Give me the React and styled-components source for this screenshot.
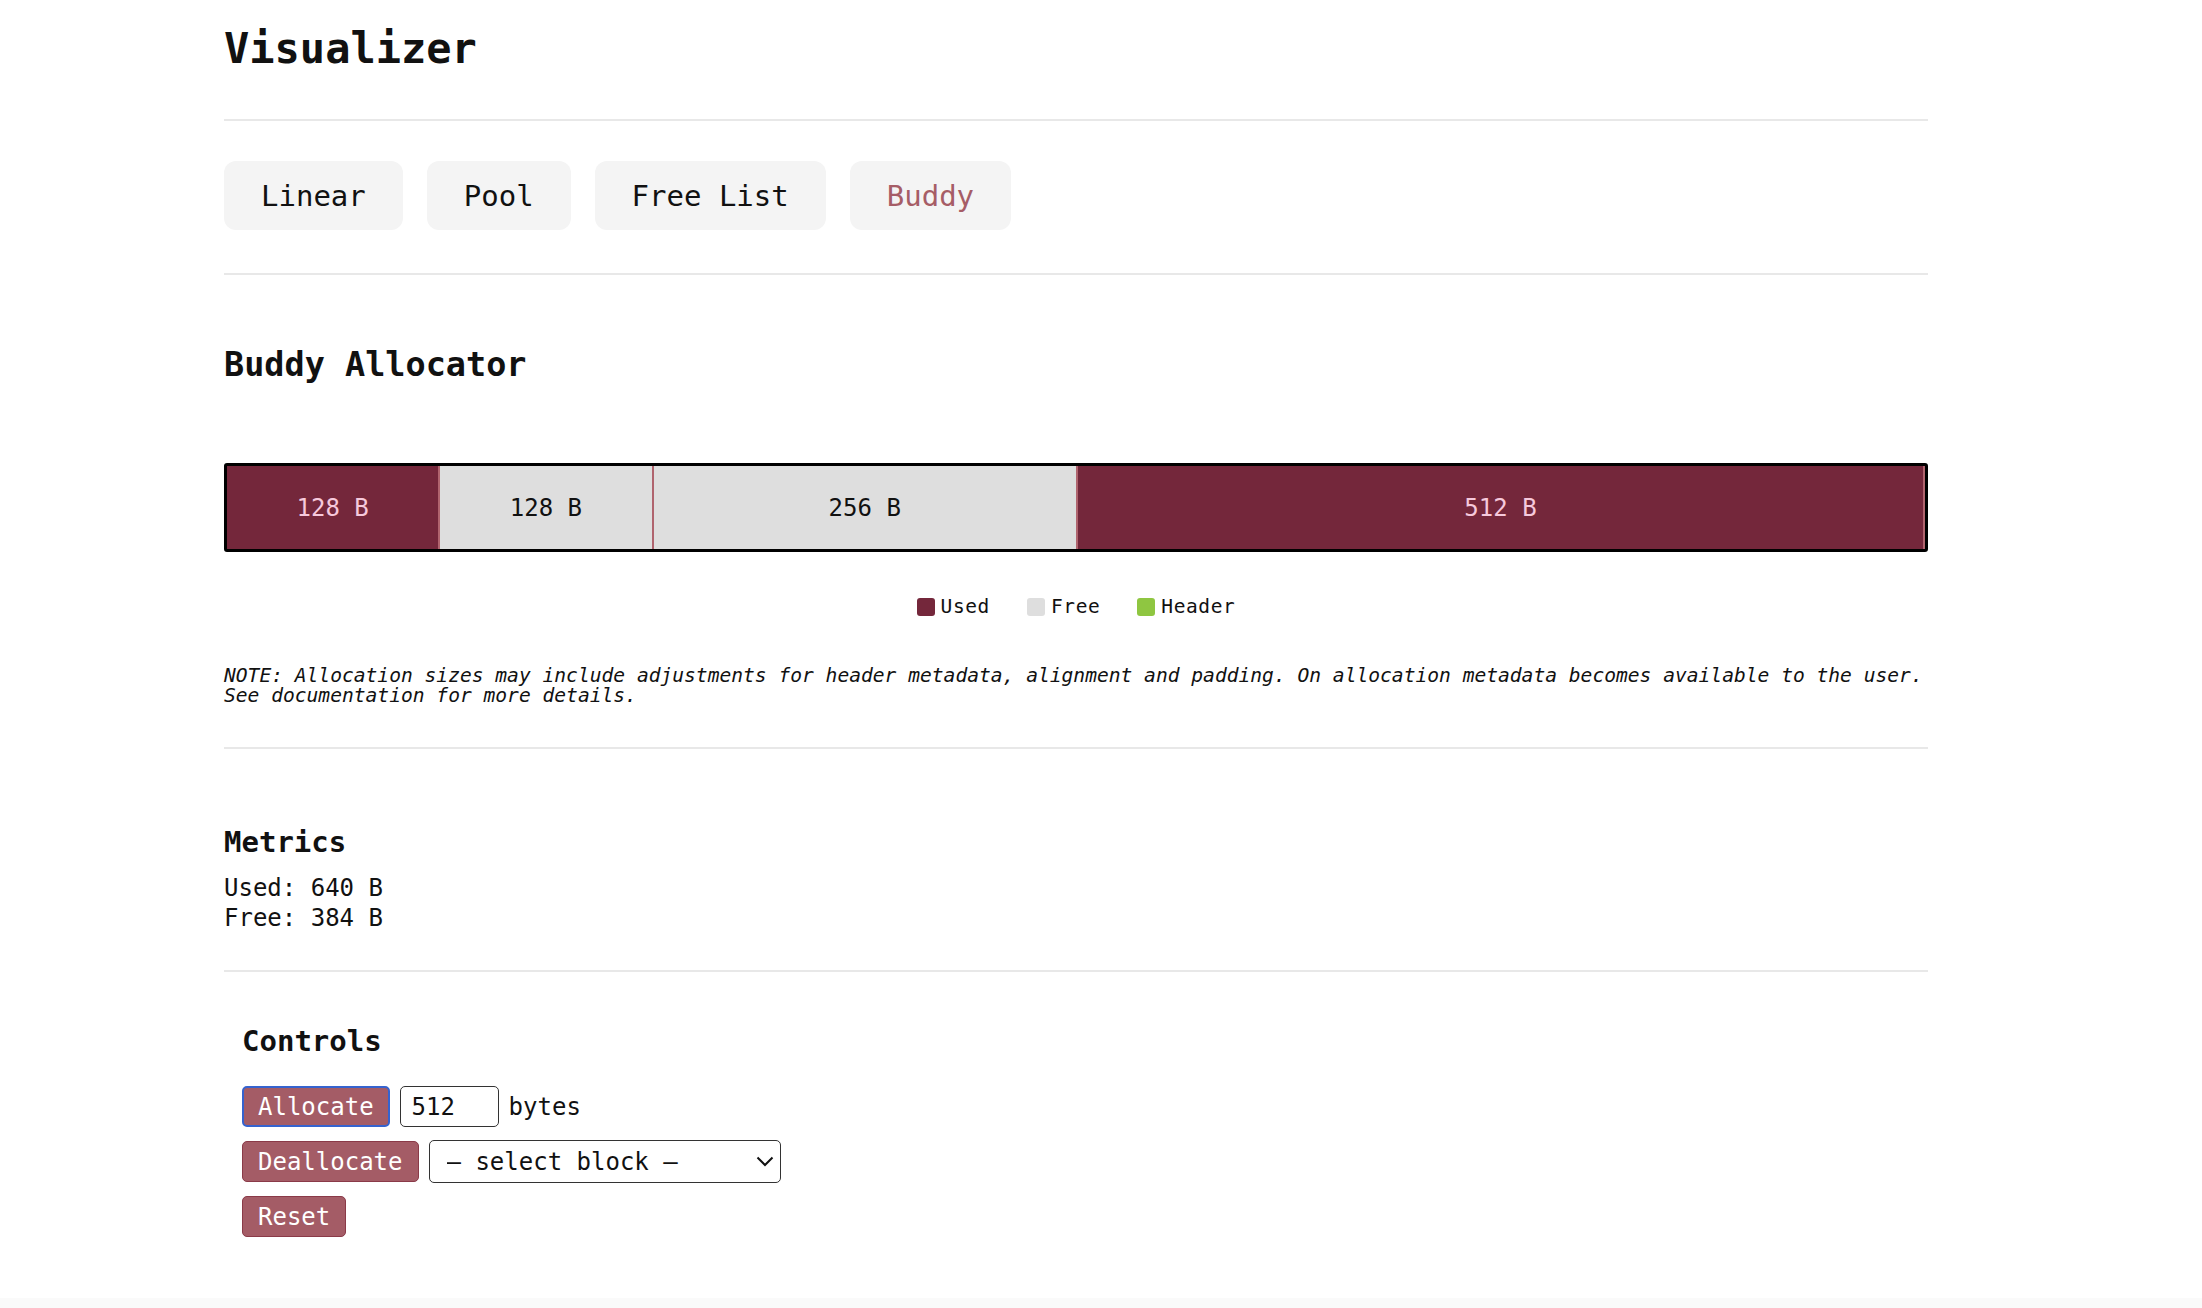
import React from "react";
import styled, { createGlobalStyle } from "styled-components";

const GlobalStyle = createGlobalStyle`
  html, body {
    margin: 0;
    padding: 0;
    background: #fafafa;
    color: #111;
    font-family: "DejaVu Sans Mono", "Liberation Mono", monospace;
  }
  * { box-sizing: border-box; }
`;

const Page = styled.div`
  background: #fff;
  min-height: 1298px;
  padding-top: 24px;
`;

const Container = styled.main`
  margin-left: 224px;
  width: 1704px;
`;

const Title = styled.h1`
  margin: 0;
  font-size: 42px;
  line-height: 50px;
  font-weight: bold;
`;

const Divider = styled.hr`
  border: 0;
  height: 2px;
  background: #e8e8e8;
  margin: ${(p) => p.$top}px 0 0 0;
`;

const Nav = styled.nav`
  display: flex;
  gap: 24px;
  margin-top: 40px;
`;

const NavButton = styled.button`
  height: 69px;
  padding: 0 37px;
  border: 0;
  border-radius: 12px;
  background: #f4f4f4;
  font-family: inherit;
  font-size: 29px;
  color: ${(p) => (p.$active ? "#a65d66" : "#111")};
  cursor: pointer;
`;

const SectionTitle = styled.h2`
  margin: 70px 0 0 0;
  font-size: 33.5px;
  line-height: 40px;
  font-weight: bold;
`;

const Bar = styled.div`
  display: flex;
  margin-top: 78px;
  height: 89px;
  border: 3px solid #000;
  border-radius: 3px;
  overflow: hidden;
`;

const Block = styled.div`
  flex: ${(p) => p.$size} 1 0;
  display: flex;
  align-items: center;
  justify-content: center;
  background: ${(p) => (p.$used ? "#74273b" : "#dedede")};
  color: ${(p) => (p.$used ? "#f6c9dc" : "#111")};
  border-right: 2px solid #b0646e;
  font-size: 24px;
`;

const Legend = styled.div`
  display: flex;
  justify-content: center;
  gap: 37px;
  margin-top: 43px;
  line-height: 24px;
`;

const LegendItem = styled.div`
  display: flex;
  align-items: center;
  gap: 6px;
  font-size: 19.5px;
  letter-spacing: 0.6px;
`;

const Swatch = styled.span`
  width: 18px;
  height: 18px;
  border-radius: 3px;
  background: ${(p) => p.$color};
`;

const Note = styled.p`
  margin: 47px 0 0 0;
  font-size: 19.6px;
  line-height: 20px;
  font-style: italic;
`;

const SubTitle = styled.h3`
  margin: ${(p) => p.$top}px 0 0 0;
  font-size: 29px;
  line-height: 35px;
  font-weight: bold;
`;

const Metrics = styled.div`
  margin-top: 13px;
  font-size: 24px;
  line-height: 30px;
`;

const Controls = styled.section`
  padding-left: 18px;
`;

const Rows = styled.div`
  display: flex;
  flex-direction: column;
  gap: 14px;
  margin-top: 27px;
`;

const Row = styled.div`
  display: flex;
  align-items: center;
  gap: 10px;
  height: 41px;
  font-size: 24px;
`;

const ActionButton = styled.button`
  height: 41px;
  padding: 0 ${(p) => (p.$focused ? 14 : 15)}px;
  border: ${(p) => (p.$focused ? "2px solid #3563cf" : "1px solid #8a3a48")};
  border-radius: 5px;
  background: #a45c66;
  color: #fff;
  font-family: inherit;
  font-size: 24px;
  cursor: pointer;
`;

const NumberInput = styled.input`
  width: 99px;
  height: 41px;
  padding: 0 11px;
  border: 1px solid #333;
  border-radius: 5px;
  font-family: inherit;
  font-size: 24px;
  color: #111;
  background: #fff;
`;

const SelectWrap = styled.div`
  position: relative;
  width: 352px;
  height: 43px;
`;

const Select = styled.select`
  appearance: none;
  width: 100%;
  height: 100%;
  padding: 0 17px;
  border: 1px solid #333;
  border-radius: 5px;
  background: #fff;
  font-family: inherit;
  font-size: 24px;
  color: #111;
`;

const Chevron = styled.svg`
  position: absolute;
  right: 7px;
  top: 16px;
  pointer-events: none;
`;

const blocks = [
  { size: 128, used: true },
  { size: 128, used: false },
  { size: 256, used: false },
  { size: 512, used: true },
];

export default function App() {
  return (
    <>
      <GlobalStyle />
      <Page>
        <Container>
          <Title>Visualizer</Title>
          <Divider $top={45} />
          <Nav>
            <NavButton>Linear</NavButton>
            <NavButton>Pool</NavButton>
            <NavButton>Free List</NavButton>
            <NavButton $active>Buddy</NavButton>
          </Nav>
          <Divider $top={43} />
          <SectionTitle>Buddy Allocator</SectionTitle>
          <Bar>
            {blocks.map((b, i) => (
              <Block key={i} $size={b.size} $used={b.used}>
                {b.size} B
              </Block>
            ))}
          </Bar>
          <Legend>
            <LegendItem>
              <Swatch $color="#74273b" />
              Used
            </LegendItem>
            <LegendItem>
              <Swatch $color="#dedede" />
              Free
            </LegendItem>
            <LegendItem>
              <Swatch $color="#8fc641" />
              Header
            </LegendItem>
          </Legend>
          <Note>
            NOTE: Allocation sizes may include adjustments for header metadata,
            alignment and padding. On allocation metadata becomes available to
            the user. See documentation for more details.
          </Note>
          <Divider $top={41} />
          <SubTitle $top={76}>Metrics</SubTitle>
          <Metrics>
            <div>Used: 640 B</div>
            <div>Free: 384 B</div>
          </Metrics>
          <Divider $top={37} />
          <Controls>
            <SubTitle $top={52}>Controls</SubTitle>
            <Rows>
              <Row>
                <ActionButton $focused>Allocate</ActionButton>
                <NumberInput type="text" defaultValue="512" />
                <span>bytes</span>
              </Row>
              <Row>
                <ActionButton>Deallocate</ActionButton>
                <SelectWrap>
                  <Select defaultValue="">
                    <option value="">– select block –</option>
                  </Select>
                  <Chevron width="18" height="11" viewBox="0 0 18 11">
                    <path
                      d="M1.5 1.5 L9 9 L16.5 1.5"
                      fill="none"
                      stroke="#111"
                      strokeWidth="2"
                    />
                  </Chevron>
                </SelectWrap>
              </Row>
              <Row>
                <ActionButton>Reset</ActionButton>
              </Row>
            </Rows>
          </Controls>
        </Container>
      </Page>
    </>
  );
}
